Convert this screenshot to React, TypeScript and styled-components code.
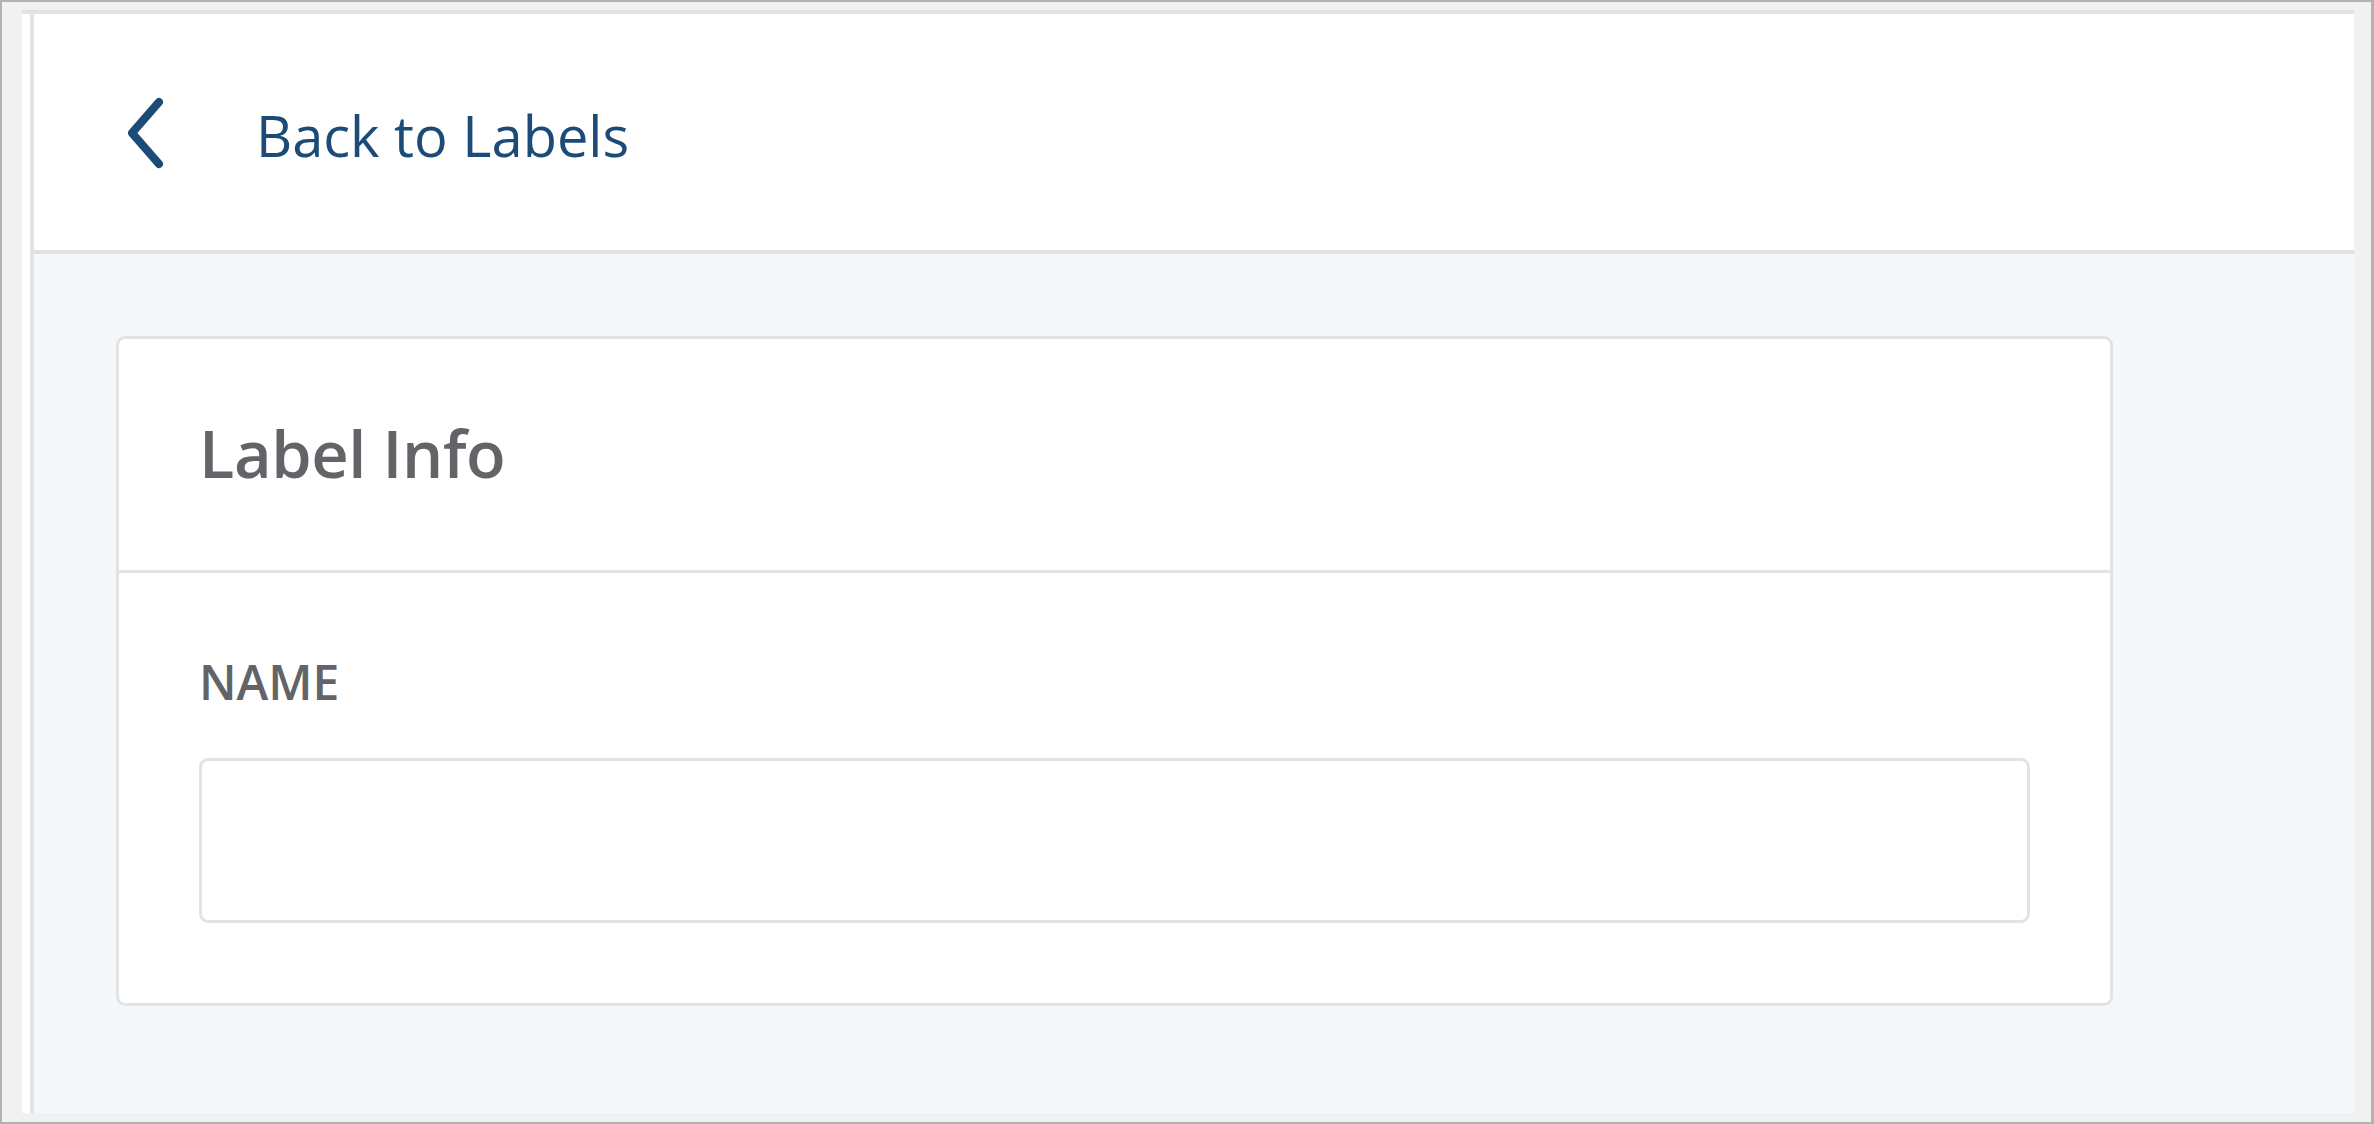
import React from "react";
import styled, { createGlobalStyle } from "styled-components";

const GlobalStyle = createGlobalStyle`
  html, body {
    margin: 0;
    padding: 0;
    height: 100%;
  }
  body {
    font-family: "Open Sans", "Noto Sans", Arial, sans-serif;
    background: #f1f1f1;
  }
  #root {
    height: 100%;
  }
  * {
    box-sizing: border-box;
  }
`;

const Frame = styled.div`
  height: 100vh;
  border: 2px solid #b2b2b2;
  border-right-width: 3px;
  background: #f1f1f1;
  padding: 8px 17px 9px 20px;
  display: flex;
`;

const Shell = styled.div`
  flex: 1;
  display: flex;
  background: #ffffff;
  border-top: 4px solid #e2e2e2;
  padding-left: 8px;
`;

const Main = styled.main`
  flex: 1;
  display: flex;
  flex-direction: column;
  border-left: 4px solid #e2e2e2;
  min-width: 0;
`;

const TopBar = styled.header`
  height: 240px;
  flex-shrink: 0;
  display: flex;
  align-items: center;
  padding: 5px 0 0 90px;
  background: #ffffff;
  border-bottom: 4px solid #e1e1e1;
`;

const BackLink = styled.a`
  display: flex;
  align-items: center;
  gap: 88px;
  color: #1c4b77;
  text-decoration: none;
  font-size: 56px;
  font-weight: 400;
  cursor: pointer;
`;

const Chevron = styled.svg`
  width: 44px;
  height: 72px;
  flex-shrink: 0;
  margin-top: -4px;
`;

const Content = styled.div`
  flex: 1;
  background: #f5f8fb;
  padding: 82px 0 0 82px;
`;

const Card = styled.section`
  width: 1997px;
  background: #ffffff;
  border: 3px solid #e2e3e4;
  border-radius: 9px;
`;

const CardHeader = styled.div`
  height: 234px;
  display: flex;
  align-items: center;
  padding: 0 80px 4px;
  border-bottom: 3px solid #e2e3e4;
`;

const CardTitle = styled.h2`
  margin: 0;
  font-size: 65px;
  letter-spacing: -0.4px;
  font-weight: 600;
  color: #626468;
`;

const CardBody = styled.div`
  padding: 84px 80px 80px;
`;

const FieldLabel = styled.label`
  display: block;
  font-size: 48px;
  line-height: 50px;
  font-weight: 600;
  color: #626468;
  text-transform: uppercase;
  margin-bottom: 51px;
`;

const TextInput = styled.input`
  display: block;
  width: 100%;
  height: 165px;
  border: 3px solid #e2e3e4;
  border-radius: 9px;
  background: #ffffff;
  font-family: inherit;
  font-size: 50px;
  padding: 0 24px;
  outline: none;
`;

export default function App() {
  return (
    <>
      <GlobalStyle />
      <Frame>
        <Shell>
          <Main>
            <TopBar>
              <BackLink>
                <Chevron viewBox="0 0 44 72" fill="none">
                  <path
                    d="M35 5 L8 36 L35 67"
                    stroke="#1c4b77"
                    strokeWidth="8"
                    strokeLinecap="round"
                    strokeLinejoin="round"
                  />
                </Chevron>
                <span>Back to Labels</span>
              </BackLink>
            </TopBar>
            <Content>
              <Card>
                <CardHeader>
                  <CardTitle>Label Info</CardTitle>
                </CardHeader>
                <CardBody>
                  <FieldLabel htmlFor="label-name">Name</FieldLabel>
                  <TextInput id="label-name" type="text" />
                </CardBody>
              </Card>
            </Content>
          </Main>
        </Shell>
      </Frame>
    </>
  );
}
